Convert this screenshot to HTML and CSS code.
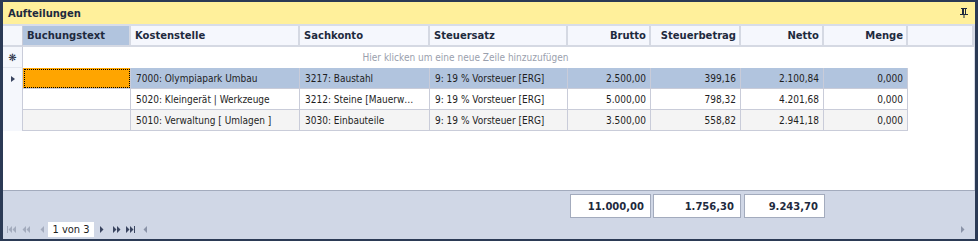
FILE: index.html
```html
<!DOCTYPE html>
<html>
<head>
<meta charset="utf-8">
<link rel="stylesheet" href="styles.css">
</head>
<body>
<div class="frame">
  <div class="titlebar">
    <span class="title">Aufteilungen</span>
    <svg class="pin" width="10" height="10" viewBox="0 0 10 10"><path d="M2 0h6v1H7v5h2v1H5.5v3h-1V7H1V6h2V1H2z M5 1h1v5H5z" fill="#1e2a3e" fill-rule="evenodd"/></svg>
  </div>
  <div class="sep"></div>
  <div class="gridarea">
    <div class="grid">
      <div class="row head">
        <div class="ind"></div>
        <div class="c c1 hl">Buchungstext</div>
        <div class="c c2">Kostenstelle</div>
        <div class="c c3">Sachkonto</div>
        <div class="c c4">Steuersatz</div>
        <div class="c c5 r">Brutto</div>
        <div class="c c6 r">Steuerbetrag</div>
        <div class="c c7 r">Netto</div>
        <div class="c c8 r">Menge</div>
        <div class="c rest"></div>
      </div>
      <div class="row newrow">
        <div class="ind">&#x274B;</div>
        <div class="hint">Hier klicken um eine neue Zeile hinzuzufügen</div>
      </div>
      <div class="row data sel">
        <div class="ind"><span class="tri"></span></div>
        <div class="c c1 focus"></div>
        <div class="c c2">7000: Olympiapark Umbau</div>
        <div class="c c3">3217: Baustahl</div>
        <div class="c c4">9: 19 % Vorsteuer [ERG]</div>
        <div class="c c5 r">2.500,00</div>
        <div class="c c6 r">399,16</div>
        <div class="c c7 r">2.100,84</div>
        <div class="c c8 r">0,000</div>
      </div>
      <div class="row data">
        <div class="ind"></div>
        <div class="c c1"></div>
        <div class="c c2">5020: Kleingerät | Werkzeuge</div>
        <div class="c c3">3212: Steine [Mauerw…</div>
        <div class="c c4">9: 19 % Vorsteuer [ERG]</div>
        <div class="c c5 r">5.000,00</div>
        <div class="c c6 r">798,32</div>
        <div class="c c7 r">4.201,68</div>
        <div class="c c8 r">0,000</div>
      </div>
      <div class="row data alt">
        <div class="ind"></div>
        <div class="c c1"></div>
        <div class="c c2">5010: Verwaltung [ Umlagen ]</div>
        <div class="c c3">3030: Einbauteile</div>
        <div class="c c4">9: 19 % Vorsteuer [ERG]</div>
        <div class="c c5 r">3.500,00</div>
        <div class="c c6 r">558,82</div>
        <div class="c c7 r">2.941,18</div>
        <div class="c c8 r">0,000</div>
      </div>
    </div>
  </div>
  <div class="footer">
    <div class="sums">
      <div class="sum s5">11.000,00</div>
      <div class="sum s6">1.756,30</div>
      <div class="sum s7">9.243,70</div>
    </div>
    <div class="navbar">
      <div class="nav">
        <svg class="ico i1" width="9" height="7" viewBox="0 0 9 7"><path d="M0 0h1v7H0z M5 0v7L1.5 3.5z M9 0v7L5.5 3.5z" fill="#a3abbd"/></svg>
        <svg class="ico i2" width="8" height="7" viewBox="0 0 8 7"><path d="M4 0v7L0.5 3.5z M8 0v7L4.5 3.5z" fill="#a3abbd"/></svg>
        <svg class="ico i3" width="4" height="7" viewBox="0 0 4 7"><path d="M4 0v7L0.5 3.5z" fill="#a3abbd"/></svg>
        <span class="page">1 von 3</span>
        <svg class="ico i4" width="4" height="7" viewBox="0 0 4 7"><path d="M0 0v7L3.5 3.5z" fill="#3a4560"/></svg>
        <svg class="ico i5" width="8" height="7" viewBox="0 0 8 7"><path d="M0 0v7L3.5 3.5z M4 0v7L7.5 3.5z" fill="#3a4560"/></svg>
        <svg class="ico i6" width="9" height="7" viewBox="0 0 9 7"><path d="M0 0v7L3.5 3.5z M4 0v7L7.5 3.5z M8 0h1v7H8z" fill="#3a4560"/></svg>
        <svg class="ico i7" width="4" height="7" viewBox="0 0 4 7"><path d="M4 0v7L0.5 3.5z" fill="#8a93a8"/></svg>
      </div>
      <svg class="scr" width="4" height="7" viewBox="0 0 4 7"><path d="M0 0v7L3.5 3.5z" fill="#8a93a8"/></svg>
    </div>
  </div>
</div>
</body>
</html>
```
FILE: styles.css
```css
html, body { margin: 0; padding: 0; }
body {
  width: 978px; height: 241px; overflow: hidden;
  font-family: "DejaVu Sans Condensed", "DejaVu Sans", sans-serif;
  font-size: 10px;
  color: #1e1e1e;
  background: #2b3a55;
}
.frame {
  box-sizing: border-box;
  width: 978px; height: 241px;
  border: 2px solid #2b3a55;
  border-left-width: 3px;
  border-right-width: 3px;
  display: flex; flex-direction: column;
  background: #fff;
}
.titlebar {
  height: 22px; flex: none;
  background: #fff09b;
  display: flex; align-items: center; justify-content: space-between;
  padding: 0 6px 0 5px;
}
.title { font-family: "DejaVu Sans", sans-serif; font-weight: bold; color: #1e2a3e; font-size: 10px; }
.sep { height: 2px; background: #d8dde8; flex: none; }
.gridarea {
  flex: 1; background: #fff;
  border-right: 1px solid #d7dbe6;
}
.row { display: flex; height: 21px; box-sizing: border-box; }
.ind {
  width: 20px; flex: none; box-sizing: border-box;
  background: #f5f7fc;
  border-right: 1px solid #c9ccd9;
  display: flex; align-items: center; justify-content: center;
  color: #1e2a3e; font-size: 10px;
  font-family: "DejaVu Sans", sans-serif;
}
.c {
  box-sizing: border-box; flex: none;
  border-right: 1px solid #c9ccd9;
  border-bottom: 1px solid #c9ccd9;
  padding: 0 4px 0 5px;
  display: flex; align-items: center;
  white-space: nowrap; overflow: hidden;
}
.c.r { justify-content: flex-end; }
.c1 { width: 108px; }
.c2 { width: 169px; }
.c3 { width: 130px; }
.c4 { width: 138px; }
.c5 { width: 83px; }
.c6 { width: 90px; }
.c7 { width: 83px; }
.c8 { width: 84px; }
.rest { flex: 1; }
.head .c {
  background: #f5f7fd;
  font-family: "DejaVu Sans", sans-serif;
  font-weight: bold; color: #1e2a3e;
  border-right: 2px solid #d5d9e3;
  border-bottom: 2px solid #d5d9e3;
  padding: 0 3px 0 4px;
}
.head .c.hl { background: #b1c4de; }
.head .ind { border-bottom: 2px solid #d5d9e3; }
.newrow .ind { border-bottom: 1px solid #e3e6ee; }
.newrow .hint {
  width: 885px; flex: none; box-sizing: border-box;
  display: flex; align-items: center; justify-content: center;
  color: #9aa0ad;
}
.data .c { background: #fff; }
.data.sel .c { background: #b1c4de; }
.data.alt .c { background: #f4f4f4; }
.data.sel .c.focus { background: #ffa500; outline: 1px dotted #000; outline-offset: -2px; }
.tri {
  width: 0; height: 0;
  border-top: 3.5px solid transparent;
  border-bottom: 3.5px solid transparent;
  border-left: 4px solid #3a4560;
}
.footer {
  height: 49px; flex: none;
  background: #d0d7e6;
  border-top: 1px solid #a3abbd;
  display: flex; flex-direction: column;
  box-sizing: border-box;
}
.sums { display: flex; padding: 3px 0 0 567px; gap: 2px; height: 23px; }
.sum {
  box-sizing: border-box; height: 24px;
  background: #fff; border: 1px solid #a3abbd;
  font-family: "DejaVu Sans", sans-serif;
  font-weight: bold; color: #1e2a3e;
  display: flex; align-items: center; justify-content: flex-end;
  padding-right: 6px;
}
.s5 { width: 81px; }
.s6 { width: 88px; }
.s7 { width: 81px; margin-left: 1px; }
.navbar {
  margin-top: auto;
  display: flex; align-items: center; justify-content: space-between;
  height: 17px; padding: 0 10px 1px 4px;
}
.nav { display: flex; align-items: center; height: 17px; }
.i2 { margin-left: 6px; }
.i3 { margin-left: 10px; }
.page {
  margin-left: 4px;
  background: #fff; height: 15px; width: 46px; box-sizing: border-box;
  display: flex; align-items: center; justify-content: center;
  font-size: 11px; color: #1e1e1e;
}
.i4 { margin-left: 6px; }
.i5 { margin-left: 9px; }
.i6 { margin-left: 5px; }
.i7 { margin-left: 8px; }
```
